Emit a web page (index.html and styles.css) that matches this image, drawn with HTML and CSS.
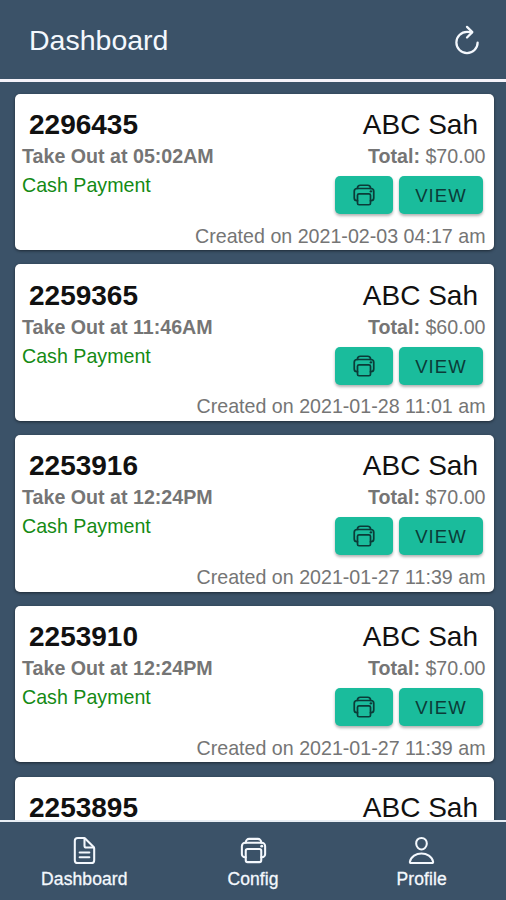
FILE: index.html
```
<!DOCTYPE html>
<html lang="en">
<head>
    <meta charset="UTF-8">
    <meta name="viewport" content="width=device-width, initial-scale=1.0">
    <title>Dashboard</title>
    <link rel="stylesheet" href="styles.css">
</head>
<body>
    <svg class="sprite" width="0" height="0">
        <symbol id="icon-print" viewBox="0 0 512 512">
            <path d="M384 368h12a52 52 0 0052-52V184a56 56 0 00-56-56H120a56 56 0 00-56 56v132a52 52 0 0052 52h12"/>
            <rect x="128" y="232" width="256" height="216" rx="30"/>
            <path d="M384 128v-8a56 56 0 00-56-56H184a56 56 0 00-56 56v8"/>
            <circle class="dot" cx="392" cy="184" r="24"/>
        </symbol>
    </svg>

    <header class="toolbar">
        <h1>Dashboard</h1>
        <svg class="icon refresh" viewBox="0 0 512 512">
            <path d="M320 146s24.36-12-64-12a160 160 0 10160 160"/>
            <path d="M256 58l80 80-80 80"/>
        </svg>
    </header>

    <main id="orders" class="orders"></main>

    <nav class="tabs">
        <a class="tab">
            <svg class="icon" viewBox="0 0 512 512">
                <path d="M416 221.25V416a48 48 0 01-48 48H144a48 48 0 01-48-48V96a48 48 0 0148-48h98.75a32 32 0 0122.62 9.37l141.26 141.26a32 32 0 019.37 22.62z"/>
                <path d="M256 56v120a32 32 0 0032 32h120M176 288h160M176 368h160"/>
            </svg>
            <span>Dashboard</span>
        </a>
        <a class="tab">
            <svg class="icon"><use href="#icon-print"/></svg>
            <span>Config</span>
        </a>
        <a class="tab">
            <svg class="icon" viewBox="0 0 512 512">
                <path d="M344 144c-3.92 52.87-44 96-88 96s-84.15-43.12-88-96c-4-55 35-96 88-96s92 42 88 96z"/>
                <path d="M256 304c-87 0-175.3 48-191.64 138.6C62.39 453.52 68.57 464 80 464h352c11.44 0 17.62-10.48 15.64-21.4C431.3 352 343 304 256 304z"/>
            </svg>
            <span>Profile</span>
        </a>
    </nav>

    <script>
        const orders = [
            { id: "2296435", name: "ABC Sah", time: "05:02AM", total: "$70.00", created: "2021-02-03 04:17 am" },
            { id: "2259365", name: "ABC Sah", time: "11:46AM", total: "$60.00", created: "2021-01-28 11:01 am" },
            { id: "2253916", name: "ABC Sah", time: "12:24PM", total: "$70.00", created: "2021-01-27 11:39 am" },
            { id: "2253910", name: "ABC Sah", time: "12:24PM", total: "$70.00", created: "2021-01-27 11:39 am" }
        ];
        const nextOrder = { id: "2253895", name: "ABC Sah" };

        const ordersContainer = document.getElementById('orders');

        function addCard(html) {
            const card = document.createElement('div');
            card.className = 'card';
            card.innerHTML = html;
            ordersContainer.appendChild(card);
        }

        function heading(order) {
            return `<div class="row heading"><b>${order.id}</b><span>${order.name}</span></div>`;
        }

        orders.forEach(order => {
            addCard(`
                ${heading(order)}
                <div class="row detail"><b>Take Out at ${order.time}</b><span><b>Total:</b> ${order.total}</span></div>
                <div class="row payment">
                    <span class="method">Cash Payment</span>
                    <div class="actions">
                        <button class="print" aria-label="Print"><svg class="icon"><use href="#icon-print"/></svg></button>
                        <button class="view">VIEW</button>
                    </div>
                </div>
                <div class="created">Created on ${order.created}</div>
            `);
        });
        addCard(heading(nextOrder));
    </script>
</body>
</html>
```

FILE: styles.css
```
* {
    box-sizing: border-box;
}
body {
    margin: 0;
    height: 900px;
    display: flex;
    flex-direction: column;
    overflow: hidden;
    font-family: "Liberation Sans", Arial, sans-serif;
    background-color: #3b5268;
}
.sprite {
    display: none;
}
.icon {
    fill: none;
    stroke: currentColor;
    stroke-width: 34;
    stroke-linecap: round;
    stroke-linejoin: round;
}
.dot {
    fill: currentColor;
    stroke: none;
}
.toolbar {
    flex: none;
    height: 82px;
    padding: 0 22px 0 29px;
    display: flex;
    align-items: center;
    justify-content: space-between;
    color: #f4f8fd;
    border-bottom: 3px solid #f5f3fa;
}
.toolbar h1 {
    margin: 0;
    padding-top: 2px;
    font-size: 28.5px;
    font-weight: normal;
}
.refresh {
    width: 34px;
    height: 34px;
}
.orders {
    flex: 1;
    min-height: 0;
    overflow: hidden;
    padding: 11.6px 12.5px 0 14.5px;
}
.card {
    height: 156.5px;
    margin-bottom: 14.3px;
    padding: 15.3px 8px 0 7.5px;
    border-radius: 5px;
    background-color: #fff;
    box-shadow: 0 1px 3px rgba(0, 0, 0, 0.5);
    color: #757575;
    font-size: 19.65px;
}
.row {
    display: flex;
    justify-content: space-between;
}
.heading {
    padding: 0 7.5px 0 7px;
    font-size: 28px;
    line-height: 32px;
    color: #111;
}
.detail {
    line-height: 30px;
}
.payment {
    height: 51.7px;
}
.method {
    line-height: 29px;
    color: #148a14;
}
.actions {
    display: flex;
    gap: 6px;
    padding: 5px 2.5px 0 0;
}
button {
    height: 38px;
    padding: 0;
    border: none;
    border-radius: 5px;
    background-color: #1abc9c;
    box-shadow: 0 2px 3px rgba(0, 0, 0, 0.3);
    color: #0b3b38;
    font-family: inherit;
}
.print {
    width: 58.5px;
}
.print .icon {
    display: block;
    width: 26px;
    height: 26px;
    margin: 0 auto;
}
.view {
    width: 84px;
    padding-top: 2px;
    font-size: 18.5px;
    letter-spacing: 1.1px;
}
.created {
    line-height: 26px;
    text-align: right;
}
.tabs {
    flex: none;
    height: 80px;
    display: flex;
    border-top: 2px solid #e8eef4;
    color: #f4f8fd;
}
.tab {
    flex: 1;
    display: flex;
    flex-direction: column;
    align-items: center;
    padding-top: 13px;
    font-size: 17.5px;
    line-height: 20px;
    letter-spacing: 0.1px;
    -webkit-text-stroke: 0.3px currentColor;
}
.tab .icon {
    width: 31px;
    height: 31px;
    margin-bottom: 3px;
}
```
